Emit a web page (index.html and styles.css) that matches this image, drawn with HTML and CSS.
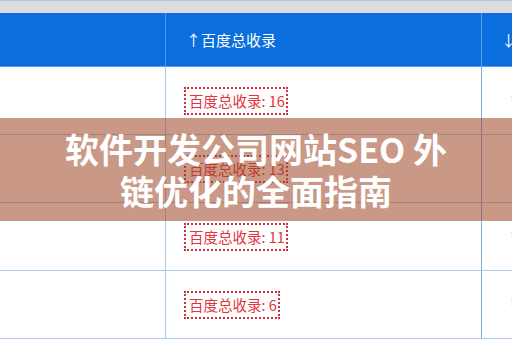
FILE: index.html
```html
<!DOCTYPE html>
<html lang="zh-CN">
<head>
<meta charset="utf-8">
<link rel="stylesheet" href="styles.css">
</head>
<body>
<div class="page">
  <div class="strip"></div>
  <div class="table">
    <div class="row head">
      <div class="cell c1"></div>
      <div class="cell c2"><span class="hd">↑百度总收录</span></div>
      <div class="cell c3"><span class="hd hd3">↓权重</span></div>
    </div>
    <div class="row">
      <div class="cell c1"></div>
      <div class="cell c2"><span class="tag">百度总收录: 16</span></div>
      <div class="cell c3"><span class="val">暂无</span></div>
    </div>
    <div class="row">
      <div class="cell c1"><span class="tag edge">&nbsp;</span></div>
      <div class="cell c2"><span class="tag">百度总收录: 13</span></div>
      <div class="cell c3"><span class="val">暂无</span></div>
    </div>
    <div class="row">
      <div class="cell c1"></div>
      <div class="cell c2"><span class="tag">百度总收录: 11</span></div>
      <div class="cell c3"><span class="val">暂无</span></div>
    </div>
    <div class="row">
      <div class="cell c1"></div>
      <div class="cell c2"><span class="tag">百度总收录: 6</span></div>
      <div class="cell c3"><span class="val">暂无</span></div>
    </div>
  </div>
  <div class="banner">
    <h1 class="title">软件开发公司网站SEO 外<br>链优化的全面指南</h1>
  </div>
</div>
</body>
</html>
```
FILE: styles.css
```css
html, body {
  margin: 0;
  padding: 0;
  background: #ffffff;
}
body {
  width: 512px;
  height: 340px;
  overflow: hidden;
  font-family: "Noto Sans CJK SC", "Noto Sans", sans-serif;
}
.page {
  position: relative;
  width: 512px;
  height: 340px;
  overflow: hidden;
}
.strip {
  height: 12px;
  background: #dddddd;
  border-top: 1px solid #a9c7ea;
}
.table {
  display: flex;
  flex-direction: column;
}
.row {
  display: grid;
  grid-template-columns: 166px 316px 120px;
  height: 68px;
  box-sizing: border-box;
  border-bottom: 1px solid #adc9e4;
}
.row.head {
  height: 54px;
  background: #0a6fdc;
  border-bottom: 1px solid #5b9ded;
}
.cell {
  display: flex;
  align-items: center;
  box-sizing: border-box;
  white-space: nowrap;
  overflow: visible;
}
.c1 {
  border-right: 1px solid #a7cbee;
}
.c2 {
  border-right: 1px solid #7ea8e6;
  padding-left: 18px;
}
.head .c1 {
  border-right-color: #4f97ec;
}
.head .c2 {
  border-right-color: #5a9cf0;
  padding-left: 20px;
}
.c3 {
  padding-left: 29px;
}
.head .c3 {
  padding-left: 19px;
}
.hd {
  color: #ffffff;
  font-size: 15px;
  line-height: 20px;
}
.tag {
  display: inline-block;
  border: 2px dotted #cf2f3a;
  padding: 1px 1px 1px 3px;
  color: #e3353c;
  font-size: 14.5px;
  line-height: 22px;
}
.tag.edge {
  margin-left: -100px;
  width: 96px;
  height: 26px;
  padding: 0;
}
.val {
  color: #333333;
  font-size: 14px;
  line-height: 20px;
}
.banner {
  position: absolute;
  left: 0;
  top: 118px;
  width: 512px;
  height: 103px;
  background: rgba(157, 68, 35, 0.55);
  display: flex;
  align-items: center;
  justify-content: center;
}
.title {
  margin: 0;
  color: #ffffff;
  font-family: "Noto Sans CJK SC", "Noto Sans", sans-serif;
  font-weight: 700;
  font-size: 34px;
  line-height: 42px;
  text-align: center;
}
```
